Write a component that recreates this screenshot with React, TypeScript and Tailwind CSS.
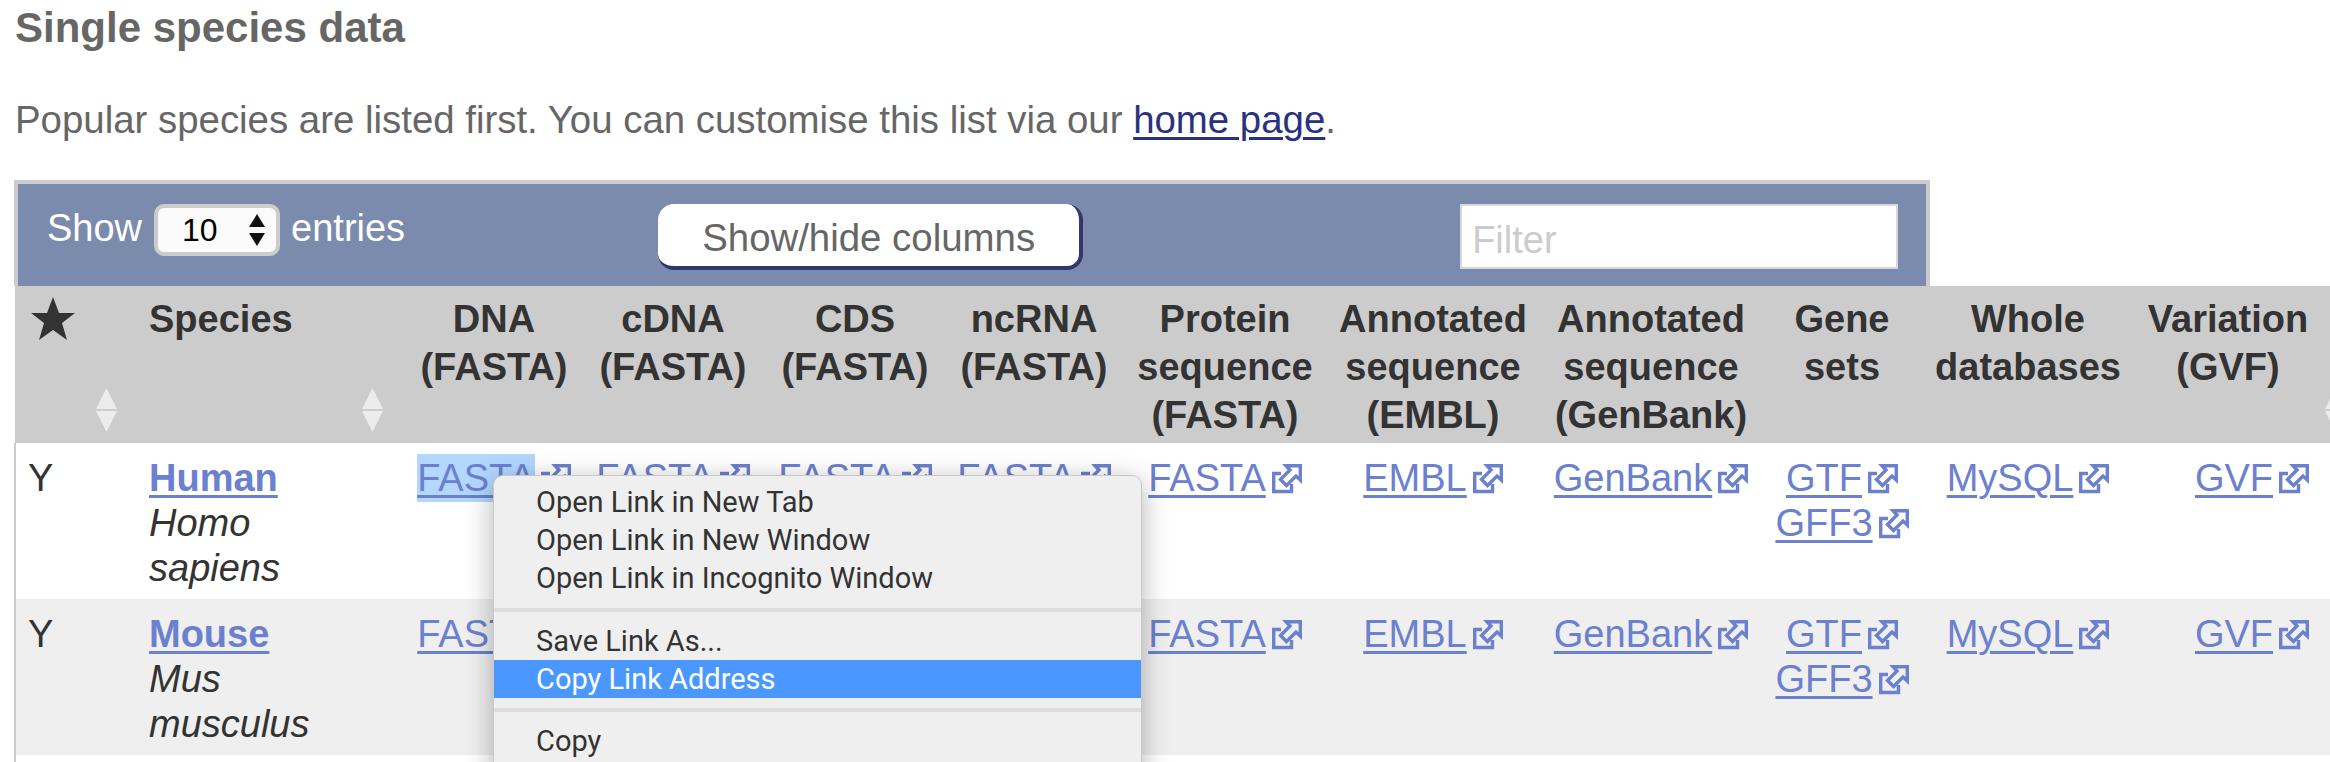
const sans = "font-['Liberation_Sans',Arial,sans-serif]";

function ExternalIcon() {
  return (
    <svg width="30" height="30" viewBox="0 0 30 30" className="inline-block ml-[6px] align-[-3px]" fill="none" stroke="#6b80cf" strokeWidth="3.400">
      <path d="M9 9.500H1.700V27.500H19.500V20" />
      <path d="M14 1.700H28.300V16L24 12L14.500 21.500L8.500 15.500L18 6Z" />
    </svg>
  );
}

function SortIcon() {
  return (
    <svg width="21" height="44" viewBox="0 0 21 44" fill="#ececec">
      <polygon points="10.500,0 21,21 0,21" />
      <polygon points="0,23 21,23 10.500,44" />
    </svg>
  );
}

function Ext({ label, selected }: { label: string; selected?: boolean }) {
  return (
    <span className="whitespace-nowrap">
      <a className={`text-[#6b80cf] underline decoration-[3px] underline-offset-[4px] ${selected ? "bg-[#b3d7ff] py-[3px]" : ""}`}>{label}</a>
      <ExternalIcon />
    </span>
  );
}

const columns = [
  { width: "w-[178px]", title: ["DNA", "(FASTA)"], links: ["FASTA"], cell: "" },
  { width: "w-[180px]", title: ["cDNA", "(FASTA)"], links: ["FASTA"], cell: "" },
  { width: "w-[184px]", title: ["CDS", "(FASTA)"], links: ["FASTA"], cell: "" },
  { width: "w-[174px]", title: ["ncRNA", "(FASTA)"], links: ["FASTA"], cell: "" },
  { width: "w-[208px]", title: ["Protein", "sequence", "(FASTA)"], links: ["FASTA"], cell: "" },
  { width: "w-[208px]", title: ["Annotated", "sequence", "(EMBL)"], links: ["EMBL"], cell: "" },
  { width: "w-[228px]", title: ["Annotated", "sequence", "(GenBank)"], links: ["GenBank"], cell: "" },
  { width: "w-[154px]", title: ["Gene", "sets"], links: ["GTF", "GFF3"], cell: "" },
  { width: "w-[218px]", title: ["Whole", "databases"], links: ["MySQL"], cell: "" },
  { width: "w-[182px]", title: ["Variation", "(GVF)"], links: ["GVF"], cell: "pl-[48px]" },
];

const species = [
  { name: "Human", latin: ["Homo", "sapiens"], bg: "bg-white" },
  { name: "Mouse", latin: ["Mus", "musculus"], bg: "bg-[#efefef]" },
];

const menuItem = "h-[38px] leading-[38px] pl-[42px] text-[#333]";

export default function App() {
  return (
    <div className={`relative w-[2330px] h-[762px] overflow-hidden bg-white text-[#666] ${sans}`}>
      <h2 className="pl-[15px] pt-[3px] text-[42px] leading-[50px] font-bold">Single species data</h2>
      <p className="pl-[15px] mt-[42px] text-[38.400px] leading-[50px]">
        Popular species are listed first. You can customise this list via our{" "}
        <a className="text-[#2a3180] underline decoration-[3px] underline-offset-[4px]">home page</a>.
      </p>

      {/* Table toolbar */}
      <div className="ml-[14px] mt-[35px] w-[1916px] h-[106px] border-[4px] border-b-0 border-[#ccc] bg-[#7b8bad] flex items-start pt-[20px] pl-[29px]">
        <span className="text-white text-[38px] leading-[48px]">Show</span>
        <div className="ml-[12px] w-[126px] h-[52px] rounded-[10px] border-[4px] border-[#ccc] bg-[#fbfbfb] flex items-center pl-[24px] text-black text-[32px]">
          <span className="w-[67px]">10</span>
          <svg width="16" height="32" viewBox="0 0 16 32" fill="#111">
            <polygon points="8,0 16,13 0,13" />
            <polygon points="0,19 16,19 8,32" />
          </svg>
        </div>
        <span className="ml-[11px] text-white text-[38px] leading-[48px]">entries</span>
        <button className="ml-[253px] w-[425px] h-[66px] pt-[5px] rounded-[16px] bg-white border-r-[4px] border-b-[4px] border-[#33356e] text-[#666] text-[38.400px]">
          Show/hide columns
        </button>
        <div className="ml-[377px] w-[438px] h-[65px] bg-white border-[2px] border-[#d8d8d8] pl-[10px] pt-[4px] text-[#ccc] text-[38px] leading-[61px]">
          Filter
        </div>
      </div>

      {/* Species table */}
      <table className="ml-[14px] w-[2400px] table-fixed border-collapse text-[38px] text-[#333]">
        <thead>
          <tr className="bg-[#ccc] h-[157px] align-top">
            <th className="relative w-[121px] pl-[16px] pt-[11px] text-left">
              <svg width="44" height="43" viewBox="0 0 44 43" fill="#333">
                <polygon points="22,0 28,16 44,16 31,26 36,43 22,33 8,43 13,26 0,16 16,16" />
              </svg>
              <span className="absolute left-[81px] top-[102px]"><SortIcon /></span>
            </th>
            <th className="relative w-[269px] pl-[13px] pt-[9px] text-left leading-[48px]">
              Species
              <span className="absolute left-[226px] top-[102px]"><SortIcon /></span>
            </th>
            {columns.map((col) => (
              <th key={col.title.join(" ")} className={`${col.width} pt-[9px] text-center leading-[48px] whitespace-nowrap`}>
                {col.title.map((line) => (
                  <div key={line}>{line}</div>
                ))}
              </th>
            ))}
            <th className="relative">
              <span className="absolute left-[6px] top-[102px]"><SortIcon /></span>
            </th>
          </tr>
        </thead>
        <tbody className="leading-[45px]">
          {species.map((row, r) => (
            <tr key={row.name} className={`${row.bg} h-[156px] align-top`}>
              <td className="border-l-[2px] border-[#ccc] pl-[12px] pt-[13px]">Y</td>
              <td className="pl-[13px] pt-[13px]">
                <a className="block font-bold text-[#6b80cf]"><span className="underline decoration-[3px] underline-offset-[4px]">{row.name}</span></a>
                {row.latin.map((word) => (
                  <i key={word} className="block">{word}</i>
                ))}
              </td>
              {columns.map((col, c) => (
                <td key={col.title.join(" ")} className={`pt-[13px] text-center ${col.cell}`}>
                  {col.links.map((link) => (
                    <div key={link}>
                      <Ext label={link} selected={r === 0 && c === 0} />
                    </div>
                  ))}
                </td>
              ))}
              <td />
            </tr>
          ))}
          <tr className="h-[20px]">
            <td className="border-l-[2px] border-[#ccc]" />
          </tr>
        </tbody>
      </table>

      {/* Context menu */}
      <div className="absolute left-[493px] top-[475px] w-[649px] h-[320px] pt-[7px] rounded-[10px] bg-[#efefef] border border-[#c8c8c8] shadow-[0_6px_28px_rgba(0,0,0,0.3)] text-[29px] font-['Roboto',sans-serif]">
        <div className={menuItem}>Open Link in New Tab</div>
        <div className={menuItem}>Open Link in New Window</div>
        <div className={menuItem}>Open Link in Incognito Window</div>
        <div className="h-[4px] mt-[11px] mb-[10px] bg-[#ddd]" />
        <div className={menuItem}>Save Link As...</div>
        <div className="h-[38px] leading-[38px] pl-[42px] bg-[#4a98ff] text-white">Copy Link Address</div>
        <div className="h-[4px] mt-[10px] mb-[10px] bg-[#ddd]" />
        <div className={menuItem}>Copy</div>
      </div>
    </div>
  );
}
